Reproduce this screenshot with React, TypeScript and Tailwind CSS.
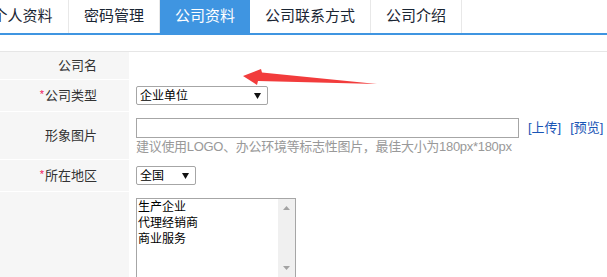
import React from "react";

const FONT = { fontFamily: "'Liberation Sans', 'Noto Sans CJK SC', sans-serif" };

function Tri() {
  return (
    <svg width="7" height="6" viewBox="0 0 7 6" className="shrink-0">
      <polygon points="0,0 7,0 3.5,6" fill="#111" />
    </svg>
  );
}

function FakeSelect({ value, width }: { value: string; width: string }) {
  return (
    <div
      className={`${width} h-[19px] border border-[#a6a6a6] rounded-[2px] bg-white flex items-center justify-between pl-[3px] pr-[6px] text-[12px] text-black leading-none`}
    >
      <span>{value}</span>
      <Tri />
    </div>
  );
}

function Label({ text, req }: { text: string; req?: boolean }) {
  return (
    <div className="w-[129px] shrink-0 bg-[#f6f6f6] flex items-center justify-end pr-[32px] text-[13px] text-[#333]">
      {req && <span className="text-[#f0145a] text-[11px] self-start mt-[9px] mr-[1px] leading-none">*</span>}
      <span>{text}</span>
    </div>
  );
}

export default function App() {
  const tabs = [
    { t: "个人资料", w: "w-[92px] -ml-[23px] border-r border-[#e8e8e8]" },
    { t: "密码管理", w: "w-[91px] border-r border-[#e8e8e8]" },
    { t: "公司资料", w: "w-[90px] bg-[#3f95e1] text-white", active: true },
    { t: "公司联系方式", w: "w-[121px] border-r border-[#e8e8e8]" },
    { t: "公司介绍", w: "w-[91px] border-r border-[#e8e8e8]" },
  ];
  return (
    <div className="relative w-[607px] h-[277px] overflow-hidden bg-white" style={FONT}>
      {/* tabs */}
      <div className="flex h-[33px] border-b-2 border-[#3f95e1] box-content">
        {tabs.map((tb) => (
          <div
            key={tb.t}
            className={`${tb.w} shrink-0 h-[33px] flex items-center justify-center text-[15px] ${tb.active ? "" : "text-[#1a2533]"}`}
          >
            {tb.t}
          </div>
        ))}
      </div>
      <div className="h-[16px]" />
      <div className="border-t border-[#e6e6e6]" />

      {/* rows */}
      <div className="flex flex-col">
        <div className="flex h-[28px] border-b border-white">
          <Label text="公司名" />
          <div className="flex-1" />
        </div>

        <div className="flex border-b border-white">
          <Label text="公司类型" req />
          <div className="flex-1 pl-[7px] py-[6px]">
            <FakeSelect value="企业单位" width="w-[132px]" />
          </div>
        </div>

        <div className="flex border-b border-white">
          <Label text="形象图片" />
          <div className="flex-1 pl-[7px] pt-[6px] pb-[4px]">
            <div className="flex items-center">
              <div className="w-[383px] h-[20px] border border-[#a6a6a6] bg-white" />
              <span className="ml-[9px] text-[13px] text-[#1a55b5]">[上传]</span>
              <span className="ml-[9px] text-[13px] text-[#1a55b5]">[预览]</span>
            </div>
            <div className="text-[13px] leading-[17px] text-[#999] tracking-[-0.3px]">
              建议使用LOGO、办公环境等标志性图片，最佳大小为180px*180px
            </div>
          </div>
        </div>

        <div className="flex border-b border-white">
          <Label text="所在地区" req />
          <div className="flex-1 pl-[7px] py-[6px]">
            <FakeSelect value="全国" width="w-[60px]" />
          </div>
        </div>

        <div className="flex h-[100px]">
          <div className="w-[129px] shrink-0 bg-[#f6f6f6]" />
          <div className="flex-1 pl-[7px] pt-[6px]">
            <div className="w-[160px] h-[80px] border border-[#a6a6a6] bg-white flex">
              <div className="flex-1 pl-[1px] text-[12px] leading-[16px] text-black">
                <div>生产企业</div>
                <div>代理经销商</div>
                <div>商业服务</div>
              </div>
              <div className="w-[17px] bg-[#f0f0f0] flex flex-col justify-between items-center py-[7px]">
                <svg width="7" height="4" viewBox="0 0 7 4">
                  <polygon points="0,4 7,4 3.5,0" fill="#a3a3a3" />
                </svg>
                <svg width="7" height="4" viewBox="0 0 7 4">
                  <polygon points="0,0 7,0 3.5,4" fill="#a3a3a3" />
                </svg>
              </div>
            </div>
          </div>
        </div>
      </div>

      {/* annotation arrow */}
      <svg className="absolute left-0 top-0 pointer-events-none" width="607" height="277">
        <polygon
          points="243,76 261,69 262,72.5 377,84 258,81 257,85"
          fill="#f23c3c"
        />
      </svg>
    </div>
  );
}
